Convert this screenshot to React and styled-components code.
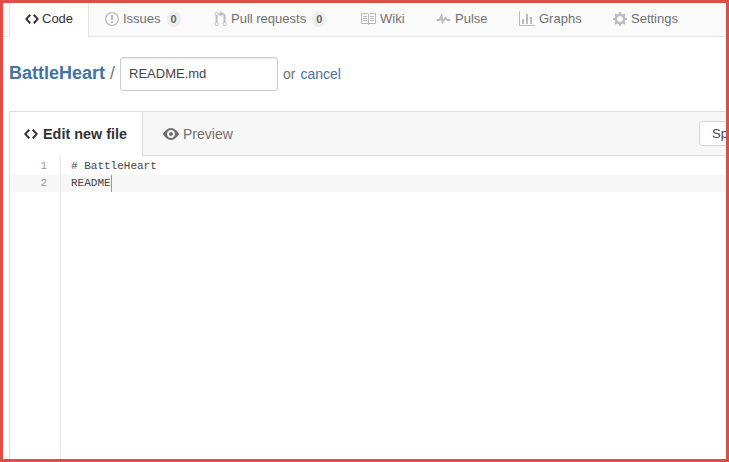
import React from "react";
import styled, { createGlobalStyle } from "styled-components";

const GlobalStyle = createGlobalStyle`
  html, body { margin: 0; padding: 0; background: #fff; }
  body { font-family: "Liberation Sans", Arial, sans-serif; font-size: 14px; color: #333; }
`;

const Frame = styled.div`
  box-sizing: border-box;
  width: 729px;
  height: 462px;
  border: 3px solid #dc4f49;
  overflow: hidden;
  background: #fff;
  display: flex;
  flex-direction: column;
`;

const RepoNav = styled.nav`
  display: flex;
  align-items: stretch;
  flex: none;
  height: 34px;
  box-sizing: border-box;
  margin-right: -3px;
  padding-left: 6px;
  background: #fafafa;
  border-bottom: 1px solid #e5e5e5;
`;

const NavTab = styled.div`
  display: flex;
  align-items: center;
  gap: ${(p) => (p.$active ? 3 : 4)}px;
  box-sizing: border-box;
  height: ${(p) => (p.$active ? "34px" : "33px")};
  width: ${(p) => p.$width}px;
  padding-left: ${(p) => p.$pad}px;
  padding-bottom: ${(p) => (p.$active ? 3 : 2)}px;
  font-size: 13px;
  color: ${(p) => (p.$active ? "#333" : "#707070")};
  background: ${(p) => (p.$active ? "#fff" : "transparent")};
  border-left: ${(p) => (p.$active ? "1px solid #e5e5e5" : "0")};
  border-right: ${(p) => (p.$active ? "1px solid #e5e5e5" : "0")};
`;

const Counter = styled.span`
  margin-left: 2px;
  padding: 1px 4px;
  font-size: 11px;
  font-weight: bold;
  line-height: 14px;
  color: #666;
  background: #eee;
  border-radius: 20px;
`;

const Glyph = styled.svg`
  flex: none;
  fill: ${(p) => p.$color || "#bbb"};
`;

const PathRow = styled.div`
  display: flex;
  align-items: center;
  flex: none;
  height: 33px;
  margin: 20px 0 21px 6px;
`;

const RepoName = styled.a`
  font-size: 18px;
  font-weight: bold;
  color: #44739f;
`;

const Separator = styled.span`
  margin: 0 5px;
  font-size: 18px;
  color: #777;
`;

const FileName = styled.div`
  box-sizing: border-box;
  width: 158px;
  height: 34px;
  padding-left: 8px;
  display: flex;
  align-items: center;
  font-size: 13px;
  color: #444;
  background: #fff;
  border: 1px solid #ccc;
  border-radius: 3px;
  box-shadow: inset 0 1px 2px rgba(0, 0, 0, 0.075);
`;

const CancelRow = styled.span`
  margin-left: 5px;
  color: #707070;
  word-spacing: 1px;
`;

const CancelLink = styled.a`
  color: #44739f;
`;

const EditorBox = styled.section`
  flex: 1;
  width: 760px;
  margin-left: 6px;
  display: flex;
  flex-direction: column;
  box-sizing: border-box;
  border-left: 1px solid #ddd;
  border-top: 1px solid #ddd;
`;

const EditorHead = styled.header`
  display: flex;
  align-items: stretch;
  flex: none;
  height: 44px;
  box-sizing: border-box;
  background: #f7f7f7;
  border-bottom: 1px solid #ddd;
`;

const EditTab = styled.div`
  display: flex;
  align-items: center;
  gap: ${(p) => (p.$active ? 5 : 4)}px;
  box-sizing: border-box;
  height: 44px;
  width: ${(p) => p.$width}px;
  padding-left: ${(p) => p.$pad}px;
  font-size: ${(p) => (p.$active ? "14.4px" : "14px")};
  font-weight: ${(p) => (p.$active ? "bold" : "normal")};
  color: ${(p) => (p.$active ? "#333" : "#707070")};
  background: ${(p) => (p.$active ? "#fff" : "transparent")};
  border-right: ${(p) => (p.$active ? "1px solid #ddd" : "0")};
`;

const IndentButton = styled.div`
  margin: 9px 0 0 auto;
  box-sizing: border-box;
  width: 70px;
  height: 25px;
  padding-left: 12px;
  display: flex;
  align-items: center;
  font-size: 13px;
  color: #444;
  background: #fff;
  border: 1px solid #d5d5d5;
  border-radius: 3px;
`;

const EditorBody = styled.div`
  flex: 1;
  position: relative;
  font-family: "Liberation Mono", "DejaVu Sans Mono", monospace;
  font-size: 11px;
  color: #444;
`;

const Gutter = styled.div`
  position: absolute;
  top: 0;
  bottom: 0;
  left: 50px;
  width: 1px;
  background: #e8e8e8;
`;

const CodeLine = styled.div`
  display: flex;
  height: ${(p) => (p.$current ? 17 : 18)}px;
  line-height: ${(p) => (p.$current ? 17 : 18)}px;
  margin-top: ${(p) => (p.$current ? 0 : 1)}px;
  background: ${(p) => (p.$current ? "#f7f7f7" : "transparent")};
`;

const LineNumber = styled.span`
  flex: none;
  width: 37px;
  text-align: right;
  color: #999;
`;

const LineText = styled.span`
  margin-left: 24px;
  display: flex;
`;

const Caret = styled.span`
  width: 1px;
  height: 17px;
  background: #999;
`;

const paths = {
  code: ["0 0 14 16", "M9.5 3L8 4.5 11.5 8 8 11.5 9.5 13 14 8 9.5 3zm-5 0L0 8l4.5 5L6 11.5 2.5 8 6 4.5 4.5 3z"],
  issue: ["0 0 14 16", "M7 2.3c3.14 0 5.7 2.56 5.7 5.7s-2.56 5.7-5.7 5.7A5.71 5.71 0 0 1 1.3 8c0-3.14 2.56-5.7 5.7-5.7zM7 1C3.14 1 0 4.14 0 8s3.14 7 7 7 7-3.14 7-7-3.14-7-7-7zm1 3H6v5h2V4zm0 6H6v2h2v-2z"],
  pull: ["0 0 12 16", "M11 11.28V5c-.03-.78-.34-1.47-.94-2.06C9.46 2.35 8.78 2.03 8 2H7V0L4 3l3 3V4h1c.27.02.48.11.69.31.21.2.3.42.31.69v6.28A1.993 1.993 0 0 0 10 15a1.993 1.993 0 0 0 1-3.72zm-1 2.92c-.66 0-1.2-.55-1.2-1.2 0-.65.55-1.2 1.2-1.2.65 0 1.2.55 1.2 1.2 0 .65-.55 1.2-1.2 1.2zM4 3c0-1.11-.89-2-2-2a1.993 1.993 0 0 0-1 3.72v6.56A1.993 1.993 0 0 0 2 15a1.993 1.993 0 0 0 1-3.72V4.72c.59-.34 1-.98 1-1.72zm-.8 10c0 .66-.55 1.2-1.2 1.2-.65 0-1.2-.55-1.2-1.2 0-.65.55-1.2 1.2-1.2.65 0 1.2.55 1.2 1.2zM2 4.2C1.34 4.2.8 3.65.8 3c0-.65.55-1.2 1.2-1.2.65 0 1.2.55 1.2 1.2 0 .65-.55 1.2-1.2 1.2z"],
  book: ["0 0 16 16", "M3 5h4v1H3V5zm0 3h4V7H3v1zm0 2h4V9H3v1zm11-5h-4v1h4V5zm0 2h-4v1h4V7zm0 2h-4v1h4V9zm2-6v9c0 .55-.45 1-1 1H9.5l-1 1-1-1H2c-.55 0-1-.45-1-1V3c0-.55.45-1 1-1h5.5l1 1 1-1H15c.55 0 1 .45 1 1zm-8 .5L7.5 3H2v9h6V3.5zm7-.5H9.5l-.5.5V12h6V3z"],
  pulse: ["0 0 14 16", "M11.5 8L8.8 5.4 6.6 8.5 5.5 1.6 2.38 8H0v2h3.6l.9-1.8.9 5.4L9 8.5l1.6 1.5H14V8z"],
  graph: ["0 0 16 16", "M16 14v1H0V0h1v14h15zM5 13H3V8h2v5zm4 0H7V3h2v10zm4 0h-2V6h2v7z"],
  gear: ["0 0 14 16", "M14 8.77v-1.6l-1.94-.64-.45-1.09.88-1.84-1.13-1.13-1.81.91-1.09-.45-.69-1.92h-1.6l-.63 1.94-1.11.45-1.84-.88-1.13 1.13.91 1.81-.45 1.09L0 7.23v1.59l1.94.64.45 1.09-.88 1.84 1.13 1.13 1.81-.91 1.09.45.69 1.92h1.59l.63-1.94 1.11-.45 1.84.88 1.13-1.13-.92-1.81.47-1.09L14 8.75v.02zM7 11c-1.66 0-3-1.34-3-3s1.34-3 3-3 3 1.34 3 3-1.34 3-3 3z"],
  eye: ["0 0 16 16", "M8.06 2C3 2 0 8 0 8s3 6 8.06 6C13 14 16 8 16 8s-3-6-7.94-6zM8 12c-2.2 0-4-1.78-4-4 0-2.2 1.8-4 4-4 2.22 0 4 1.8 4 4 0 2.22-1.78 4-4 4zm2-4c0 1.11-.89 2-2 2-1.11 0-2-.89-2-2 0-1.11.89-2 2-2 1.11 0 2 .89 2 2z"],
};

const Icon = ({ name, width = 14, color }) => (
  <Glyph viewBox={paths[name][0]} width={width} height={16} $color={color}>
    <path d={paths[name][1]} />
  </Glyph>
);

const tabs = [
  { label: "Code", icon: "code", iconColor: "#333", width: 80, pad: 15, active: true },
  { label: "Issues", icon: "issue", width: 125, pad: 16, count: 0 },
  { label: "Pull requests", icon: "pull", iconWidth: 13, width: 146, pad: 0, count: 0 },
  { label: "Wiki", icon: "book", iconWidth: 16, width: 76, pad: 0 },
  { label: "Pulse", icon: "pulse", iconWidth: 15, width: 83, pad: 0 },
  { label: "Graphs", icon: "graph", iconWidth: 16, width: 94, pad: 0 },
  { label: "Settings", icon: "gear", width: 100, pad: 0 },
];

export default function App() {
  return (
    <>
      <GlobalStyle />
      <Frame>
        <RepoNav>
          {tabs.map((tab) => (
            <NavTab key={tab.label} $active={tab.active} $width={tab.width} $pad={tab.pad}>
              <Icon name={tab.icon} width={tab.iconWidth} color={tab.iconColor} />
              {tab.label}
              {tab.count !== undefined && <Counter>{tab.count}</Counter>}
            </NavTab>
          ))}
        </RepoNav>
        <PathRow>
          <RepoName>BattleHeart</RepoName>
          <Separator>/</Separator>
          <FileName>README.md</FileName>
          <CancelRow>
            or <CancelLink>cancel</CancelLink>
          </CancelRow>
        </PathRow>
        <EditorBox>
          <EditorHead>
            <EditTab $active $width={133} $pad={14}>
              <Icon name="code" color="#333" />
              Edit new file
            </EditTab>
            <EditTab $width={120} $pad={20}>
              <Icon name="eye" width={16} color="#707070" />
              Preview
            </EditTab>
            <IndentButton>Spaces</IndentButton>
          </EditorHead>
          <EditorBody>
            <Gutter />
            <CodeLine>
              <LineNumber>1</LineNumber>
              <LineText># BattleHeart</LineText>
            </CodeLine>
            <CodeLine $current>
              <LineNumber>2</LineNumber>
              <LineText>
                README
                <Caret />
              </LineText>
            </CodeLine>
          </EditorBody>
        </EditorBox>
      </Frame>
    </>
  );
}
